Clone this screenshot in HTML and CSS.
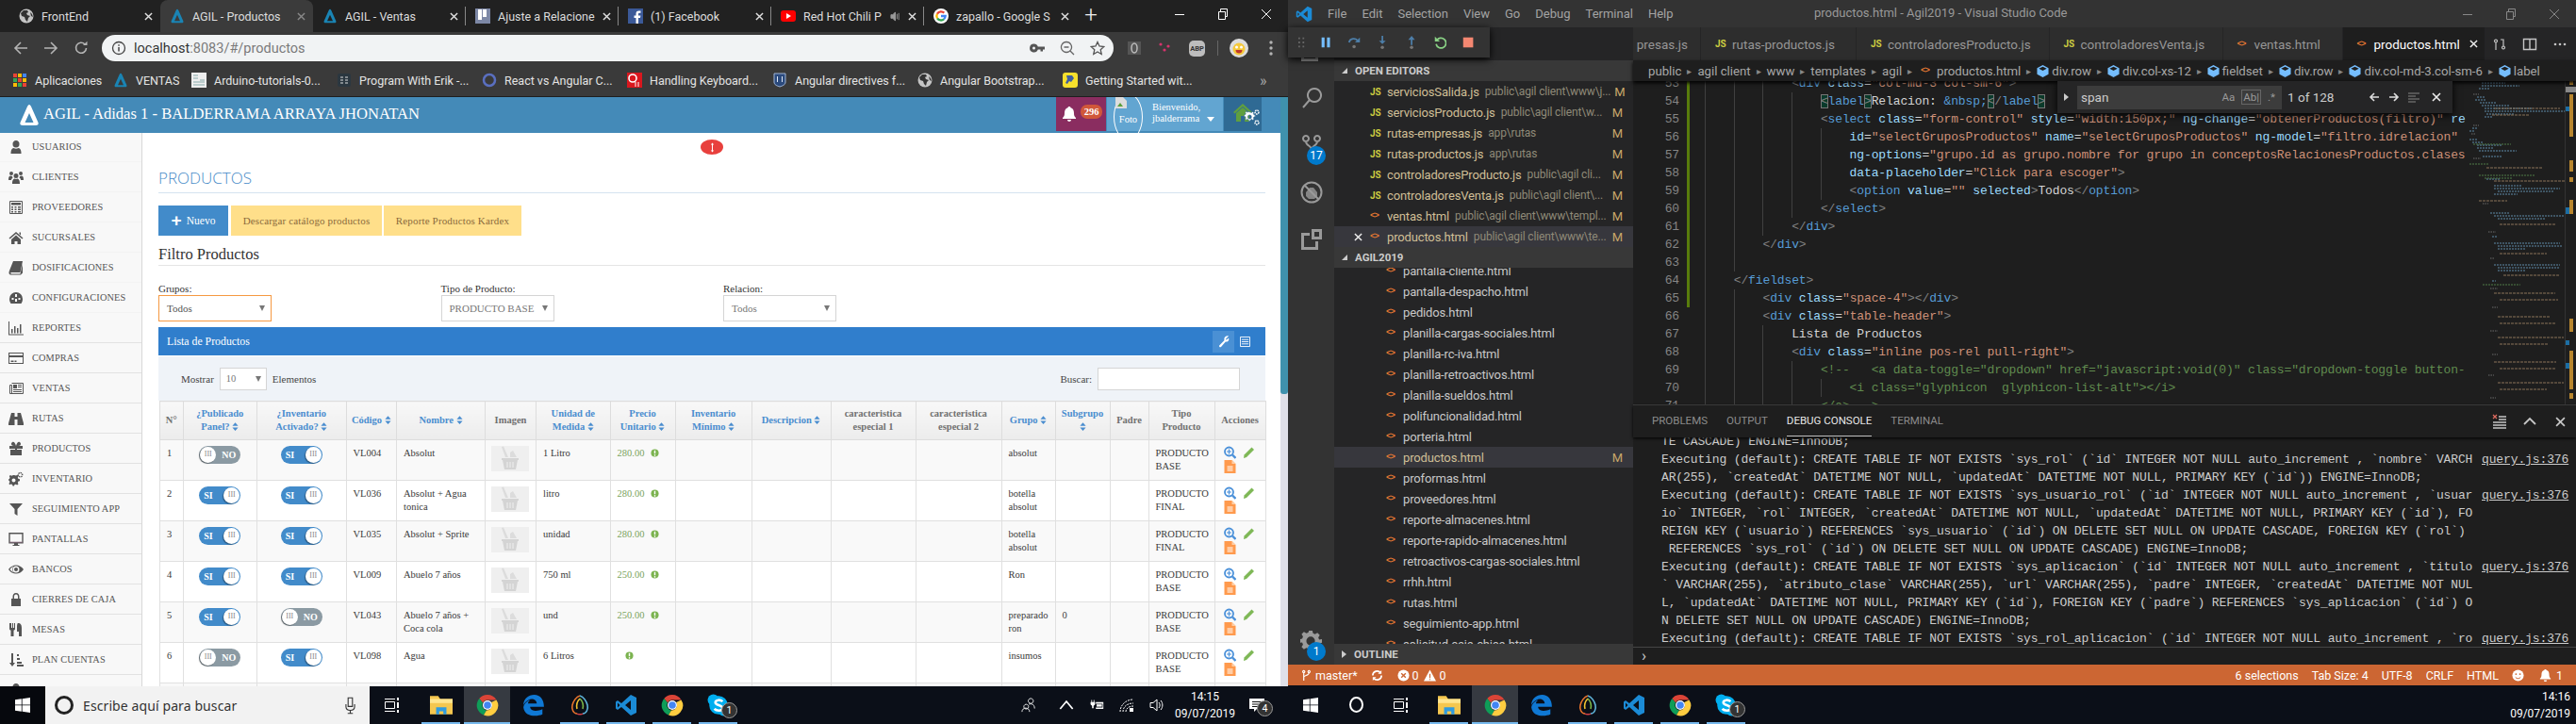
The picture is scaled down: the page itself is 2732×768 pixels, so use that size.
FILE: index.html
```html
<!DOCTYPE html>
<html lang="en">
<head>
    <meta charset="UTF-8">
    <title>AGIL - Productos</title>
    <link rel="stylesheet" href="styles.css">
</head>
<body>
<svg class="defs" width="0" height="0">
    <symbol id="i-agil" viewBox="0 0 20 24"><path fill="currentColor" fill-rule="evenodd" d="M10 1Q11 1 12 3L19.5 20Q20.5 23 17 23H3Q-.5 23 .5 20L8 3Q9 1 10 1ZM10 10 5.5 20H14.5Z"/></symbol>
    <symbol id="i-globe" viewBox="0 0 16 16"><circle cx="8" cy="8" r="7.5" fill="#c4c4c4"/><path fill="#333" d="M5 2 2 5l1 3 3 1 1 3 2 2 1-4 2-2-3-1-1-2 2-1-1-2zM12 4l2 2 1 3-2-1z"/></symbol>
    <symbol id="i-close" viewBox="0 0 10 10"><path stroke="currentColor" stroke-width="1.6" d="M1 1l8 8M9 1l-8 8"/></symbol>
    <symbol id="i-chrome" viewBox="0 0 24 24"><path fill="#db4437" d="M12 1a11 11 0 0 1 9.5 5.5H12a5.5 5.5 0 0 0-5 3L3.3 5A11 11 0 0 1 12 1z"/><path fill="#0f9d58" d="M3.3 5 7 9.5a5.5 5.5 0 0 0 4 8L8 22.5A11 11 0 0 1 3.3 5z"/><path fill="#ffcd40" d="M21.5 6.5A11 11 0 0 1 8 22.5l3-5a5.5 5.5 0 0 0 5-8.5z"/><circle cx="12" cy="12" r="5" fill="#fff"/><circle cx="12" cy="12" r="3.8" fill="#4285f4"/></symbol>
    <symbol id="i-gicon" viewBox="0 0 24 24"><circle cx="12" cy="12" r="12" fill="#fff"/><path fill="none" stroke="#4285f4" stroke-width="3.5" d="M12 12h7a7 7 0 0 1-2.500 5"/><path fill="none" stroke="#34a853" stroke-width="3.5" d="M16.500 17A7 7 0 0 1 6 15.500"/><path fill="none" stroke="#fbbc05" stroke-width="3.5" d="M6 15.500a7 7 0 0 1 0-7"/><path fill="none" stroke="#ea4335" stroke-width="3.5" d="M6 8.500a7 7 0 0 1 11-1.500"/></symbol>
    <symbol id="i-vscode" viewBox="0 0 24 24"><path fill="#1b8bd6" d="M17 1l6 3v16l-6 3L7 14l-4 3-2-1.500V8.500L3 7l4 3zM17 7l-6 5 6 5zM3 9.500v5l2.500-2.500z"/></symbol>
    <symbol id="i-sort" viewBox="0 0 8 10"><path fill="currentColor" d="M4 0l3.500 4H.5zM4 10L.5 6h7z"/></symbol>
    <symbol id="i-ok" viewBox="0 0 10 10"><circle cx="5" cy="5" r="4.500" fill="#7bb34f"/><path stroke="#fff" stroke-width="1.6" d="M5 2v3.800"/><circle cx="5" cy="7.700" r=".9" fill="#fff"/></symbol>
    <symbol id="i-mag" viewBox="0 0 13 13"><circle cx="5.500" cy="5.500" r="4.500" fill="none" stroke="#4a90d9" stroke-width="1.8"/><path stroke="#4a90d9" stroke-width="1.2" d="M5.500 3v5M3 5.500h5"/><path stroke="#4a90d9" stroke-width="2.4" d="M9 9l3.500 3.500"/></symbol>
    <symbol id="i-pencil" viewBox="0 0 13 13"><path fill="#7fb857" d="M9.500 1l2.500 2.500L4 11.500 1 12.500 1.500 9z"/></symbol>
    <symbol id="i-file" viewBox="0 0 12 14"><path fill="#ff9a4d" d="M0 0h8l4 4v10H0z"/><path fill="#ffd0a8" d="M8 0l4 4H8z"/><path stroke="#fff" d="M3 7h6M3 9h6M3 11h6"/></symbol>
    <symbol id="i-basket" viewBox="0 0 24 26"><path fill="#d4d4d4" d="M3 13h18v2h-1l-2 10H6L4 15H3z"/><path stroke="#efefef" d="M9 17v6M12 17v6M15 17v6"/><path fill="#dcdcdc" d="M3 1l2-.5L10 12H7zM12 7l3-2 4 7h-7z"/></symbol>
    <symbol id="i-win" viewBox="0 0 16 16"><path fill="#fff" d="M0 2.200 6.800 1.300V7.500H0zM7.600 1.200 16 0V7.500H7.600zM0 8.300H6.800V14.700L0 13.800zM7.600 8.300H16V16L7.600 14.800z"/></symbol>
    <symbol id="i-taskview" viewBox="0 0 16 18"><path fill="none" stroke="#fff" d="M.5 5.500h10v7H.5zM0 2.500h11M0 15.500h11"/><path fill="#fff" d="M13 1h2v3h-2zM13 6h2v6h-2zM13 14h2v3h-2z"/></symbol>
    <symbol id="i-folder" viewBox="0 0 22 22"><path fill="#f5c74f" d="M0 2h8l2 3h12v15H0z"/><path fill="#ffe58f" d="M0 5h22v4H0z"/><path fill="#2f9be0" d="M6 13h10v7h-3v-3H9v3H6z"/></symbol>
    <symbol id="i-edge" viewBox="0 0 22 22"><path fill="#0f78d4" d="M1 11C1 5 6 1 11.500 1 17.500 1 21 6 21 12.500H7.500c.3 4.500 7 5 12 2.500v5C14 22.500 2 22.500 1 13 2 9 5 7 7.500 6 6 7.500 5.500 8.500 5.500 9.500H14c0-4-5-5.500-8-3.500-2 1-4 3-5 5z"/></symbol>
    <symbol id="i-navicat" viewBox="0 0 22 24"><path fill="none" stroke="#e8732c" stroke-width="1.6" d="M11 2C7 3 4 8 3 12s1 9 5 9"/><path fill="none" stroke="#5fb3d9" stroke-width="1.6" d="M11 2c4 1 7 6 8 10s-1 9-5 9"/><path fill="none" stroke="#f2c230" stroke-width="1.6" d="M11 5c-3 3-4 7-3 11"/><path fill="none" stroke="#7ab648" stroke-width="1.6" d="M11 5c3 3 4 7 3 11"/><path fill="none" stroke="#d8424a" stroke-width="1.6" d="M8 21c1 1 5 1 6 0"/></symbol>
    <symbol id="i-skype" viewBox="0 0 22 22"><circle cx="6" cy="6" r="5.500" fill="#00aff0"/><circle cx="16" cy="16" r="5.500" fill="#00aff0"/><circle cx="11" cy="11" r="9" fill="#00aff0"/><path fill="none" stroke="#fff" stroke-width="2.4" d="M15 7.500c-2-2-7-2-7 1 0 3 7 2 7 5.500 0 3-6 3-8 .5"/></symbol>
    <symbol id="i-mic" viewBox="0 0 12 20"><path fill="none" stroke="#333" stroke-width="1.2" d="M3.500 1.500h5v10h-5zM1 9v3c0 3 2 4 5 4s5-1 5-4V9M6 16v3M3 19.500h6"/></symbol>
    <symbol id="i-chev" viewBox="0 0 12 8"><path fill="none" stroke="#fff" stroke-width="1.3" d="M1 7l5-6 5 6"/></symbol>
    <symbol id="i-people" viewBox="0 0 18 18"><path fill="none" stroke="#fff" d="M11.500 1a3 3 0 1 1-.01 0zM6 8a2.800 2.800 0 1 1-.01 0zM1 17c0-6 9-6 9 0M9 8c2-1 7-1 7 5"/></symbol>
    <symbol id="i-plug" viewBox="0 0 20 16"><path fill="#fff" d="M3 1h1v3h2V1h1v3h1v3L6 9v3H4V9L2 7V4h1zM9 4h10v9H9V11h9V6H9z"/><path fill="#fff" d="M10 7h7v3h-7z"/></symbol>
    <symbol id="i-wifi" viewBox="0 0 16 16"><path fill="none" stroke="#fff" d="M1 15C1 8 7 2 15 2M4 15c0-5 4-9 11-9M7 15c0-3 3-6 8-6" stroke-dasharray="2 1"/><path fill="#fff" d="M11 11h4v4h-4z"/></symbol>
    <symbol id="i-vol" viewBox="0 0 16 16"><path fill="none" stroke="#fff" d="M1 5.500h3L8 2v12L4 10.500H1zM10 5c1.500 2 1.500 4 0 6M12 3c2.500 3 2.500 7 0 10"/></symbol>
    <symbol id="i-note" viewBox="0 0 16 16"><path fill="#fff" d="M0 1h16v11H8l-3 3v-3H0z"/><path stroke="#111" d="M3 4.500h10M3 7h10M3 9.500h6"/></symbol>
    <symbol id="i-user" viewBox="0 0 16 16"><path fill="currentColor" d="M8 1a3.500 3.500 0 0 1 3.500 4C11.500 7 10.500 8.500 8 8.500S4.500 7 4.500 5A3.500 3.500 0 0 1 8 1zM2.500 15c0-4 1-5.500 3-6 1.500 1 3.500 1 5 0 2 .5 3 2 3 6z"/></symbol>
    <symbol id="i-users" viewBox="0 0 16 16"><path fill="currentColor" d="M8 4a2.500 2.500 0 1 1 0 5 2.500 2.500 0 0 1 0-5zM4 15c0-4 1-5 2.500-5.500 1 .5 2 .5 3 0C11 10 12 11 12 15zM3 2a2 2 0 1 1 0 4 2 2 0 0 1 0-4zM13 2a2 2 0 1 1 0 4 2 2 0 0 1 0-4zM0 11c0-3 .5-4 2-4.500.5.300 1 .5 2 .5 0 .5.200 1 .5 1.500C3.500 9.500 3 10 3 11zM16 11c0-3-.5-4-2-4.500-.5.300-1 .5-2 .5 0 .5-.2 1-.5 1.500 1 .5 1.500 1 1.500 2.500z"/></symbol>
    <symbol id="i-calc" viewBox="0 0 16 16"><path fill="none" stroke="currentColor" d="M1.500 1.500h13v13h-13z"/><path fill="currentColor" d="M3 3h10v2.500H3zM3 7h2v1.500H3zM6.500 7h2v1.500h-2zM10 7h3v1.500h-3zM3 9.500h2V11H3zM6.500 9.500h2V11h-2zM10 9.500h3V11h-3zM3 12h2v1.500H3zM6.500 12h2v1.500h-2zM10 12h3v1.500h-3z"/></symbol>
    <symbol id="i-home" viewBox="0 0 16 16"><path fill="currentColor" d="M8 2l7.500 6.500-1 1L8 4 1.500 9.500l-1-1zM3 10l5-4.500 5 4.500v5H9.500v-3h-3v3H3zM11.500 2.500H13v3l-1.500-1.300z"/></symbol>
    <symbol id="i-book" viewBox="0 0 16 16"><path fill="currentColor" d="M5 1h10l-2.500 12H3c-1 0-1 1.500 0 1.500h9.500L15 4v9.500L13 15.500H3C.5 15.500 0 13.500 1 11z"/></symbol>
    <symbol id="i-dash" viewBox="0 0 16 16"><path fill="currentColor" fill-rule="evenodd" d="M8 2a7 7 0 0 1 7 7c0 2-.5 3.500-1.500 5h-11C1.500 12.500 1 11 1 9a7 7 0 0 1 7-7zM7 4v3h2V4zM3.500 8v2h2V8zM10.500 8v2h2V8zM7 9v3h2V9z"/></symbol>
    <symbol id="i-bars" viewBox="0 0 16 16"><path fill="currentColor" d="M0 1h1v13.500h16V15.500H0zM3 9h1.500v4.500H3zM6 6h1.500v7.500H6zM9 8h1.500v5.500H9zM12 4h1.500v9.500H12z"/></symbol>
    <symbol id="i-card" viewBox="0 0 16 16"><path fill="currentColor" fill-rule="evenodd" d="M0 2h16v12H0zM1 3v2h14V3zM1 7v6h14V7zM2.500 10.500h3V12h-3zM6.500 10.500h2V12h-2z"/></symbol>
    <symbol id="i-news" viewBox="0 0 16 16"><path fill="none" stroke="currentColor" d="M3.500 2.500h12v11h-14v-9h2v9"/><path fill="currentColor" d="M5 4h4v4H5zM10 4h4v1h-4zM10 6h4v1h-4zM5 9h9v1H5zM5 11h9v1H5z"/></symbol>
    <symbol id="i-bino" viewBox="0 0 16 16"><path fill="currentColor" d="M3 2h3.500v4h3V2H13l3 11v2H9.500V9h-3v6H0v-2z"/></symbol>
    <symbol id="i-gift" viewBox="0 0 16 16"><path fill="currentColor" d="M1 5h14v3H1zM2 9h5v6H2zM9 9h5v6H9zM7 5h2v10H7zM4 1c2-1 3 1 4 4-3 0-5 0-5-2 0-1 .5-1.500 1-2zM12 1c-2-1-3 1-4 4 3 0 5 0 5-2 0-1-.5-1.500-1-2z"/></symbol>
    <symbol id="i-cogs" viewBox="0 0 16 16"><path fill="currentColor" fill-rule="evenodd" d="M5 4l2 .5 1.500-.8 1 1.300-.7 1.500.7 1.500 1.500.3v2l-1.500.3-.7 1.500.7 1.400-1.300 1-1.500-.7L5.500 14 5 15.500H3.500L3 14l-1.500-.5-1.300.7-.7-1.300.8-1.400L0 10l-1-.5v-1L0 8l.5-1.500-.7-1.400 1.200-1 1.400.7L4 4zM4.500 7.500a2 2 0 1 0 0 4 2 2 0 0 0 0-4z" transform="translate(1)"/><path fill="none" stroke="currentColor" stroke-width="1.4" stroke-dasharray="1.500 .7" d="M12.500 1.500a2.200 2.200 0 1 1-.01 0z"/></symbol>
    <symbol id="i-filter" viewBox="0 0 16 16"><path fill="currentColor" d="M1 2h14L9.500 8v7l-3-2V8z"/></symbol>
    <symbol id="i-screen" viewBox="0 0 16 16"><path fill="none" stroke="currentColor" stroke-width="1.4" d="M1 1.700h14v10H1z"/><path fill="currentColor" d="M6 12h4v2h1.500v1h-7v-1H6z"/><path fill="#8a6a80" d="M1 10.500h14v1.400H1z" opacity=".6"/></symbol>
    <symbol id="i-eye" viewBox="0 0 16 16"><path fill="currentColor" fill-rule="evenodd" d="M0 8c4-6 12-6 16 0-4 6-12 6-16 0zM8 4.500a3.500 3.500 0 1 0 0 7 3.500 3.500 0 0 0 0-7zM1.500 8c1.500 2 3 3 4 3.500C4.500 10.500 4 9.300 4 8s.5-2.500 1.500-3.500c-1 .5-2.500 1.500-4 3.500z"/><circle cx="8" cy="8" r="2" fill="currentColor"/></symbol>
    <symbol id="i-lock" viewBox="0 0 16 16"><path fill="currentColor" fill-rule="evenodd" d="M8 1c2.500 0 3.500 1.800 3.500 4v2H13v8H3V7h1.500V5C4.500 2.800 5.500 1 8 1zM6 7h4V5C10 3.500 9.500 2.500 8 2.500S6 3.500 6 5z"/></symbol>
    <symbol id="i-fork" viewBox="0 0 16 16"><path fill="currentColor" d="M2 1h1v5h1V1h1v5h1V1h1v6c0 1-1 1.500-1.500 1.800V15h-3V8.800C2 8.500 1 8 1 7V1zM10 1c3 0 4 2 4 5v9h-3v-5h-2V5c0-2 .5-4 1-4z"/></symbol>
    <symbol id="i-sortamt" viewBox="0 0 16 16"><path fill="currentColor" d="M3 1h2v10h2l-3 4-3-4h2zM9 2h2v2H9zM9 6h3v2H9zM9 10h5v2H9zM9 13h7v2H9z"/></symbol>
    <symbol id="i-search" viewBox="0 0 24 24"><path fill="none" stroke="currentColor" stroke-width="2" d="M15 2a7 7 0 1 1-.01 0zM9.500 14.500 3 22"/></symbol>
    <symbol id="i-git" viewBox="0 0 24 24"><path fill="none" stroke="currentColor" stroke-width="2" d="M6 2a3 3 0 1 1-.01 0zM18 2a3 3 0 1 1-.01 0zM6 8c0 5 6 4 6 9 0-5 6-4 6-9"/></symbol>
    <symbol id="i-debug" viewBox="0 0 24 24"><circle cx="12" cy="12" r="10.500" fill="none" stroke="currentColor" stroke-width="2"/><path fill="none" stroke="currentColor" stroke-width="2" d="M5 5l14 14"/><path fill="currentColor" d="M10 7h4l4 5v4l-3 3H9L6 16v-4z" opacity=".8"/></symbol>
    <symbol id="i-ext" viewBox="0 0 24 24"><path fill="currentColor" fill-rule="evenodd" d="M1 5h9v3H4v12h12v-6h3v9H1zM12 1h11v11H12zM15 4v5h5V4z"/></symbol>
    <symbol id="i-gear" viewBox="0 0 24 24"><path fill="currentColor" fill-rule="evenodd" d="M10 1h4l.7 3.200 2.300 1 2.800-1.700 2.700 2.700-1.700 2.800 1 2.300L25 11v4l-3.200.7-1 2.300 1.700 2.800-2.700 2.700-2.800-1.700-2.300 1L14 25h-4l-.7-3.200-2.300-1-2.800 1.700-2.700-2.700 1.700-2.800-1-2.300L-1 15v-4l3.200-.7 1-2.300L1.500 5.200l2.700-2.700L7 4.200l2.300-1zM12 8a5 5 0 1 0 0 10 5 5 0 0 0 0-10z" transform="scale(.92)"/></symbol>
    <symbol id="i-cube" viewBox="0 0 14 14"><path fill="#75beff" d="M7 0l6.500 3.500v7L7 14 .5 10.500v-7zM2.500 4 7 6.500 11.500 4 7 1.800z"/></symbol>
</svg>

<div class="screen">
    <!-- left monitor: browser -->
    <div class="monitor-left">
        <div class="tabstrip">
            <div class="tab tab-first"><svg class="tab-icon"><use href="#i-globe"/></svg><span class="tab-title">FrontEnd</span><svg class="tab-x"><use href="#i-close"/></svg></div>
            <div class="tab active"><svg class="tab-icon agil-teal"><use href="#i-agil"/></svg><span class="tab-title">AGIL - Productos</span><svg class="tab-x dim"><use href="#i-close"/></svg></div>
            <div class="tab sep"><svg class="tab-icon agil-teal"><use href="#i-agil"/></svg><span class="tab-title">AGIL - Ventas</span><svg class="tab-x"><use href="#i-close"/></svg></div>
            <div class="tab sep"><svg class="tab-icon" viewBox="0 0 16 16"><rect width="16" height="16" fill="#7d88a6"/><path fill="#fff" d="M3 1h4v11H3zM8 1h4v8H8z"/></svg><span class="tab-title">Ajuste a Relacione</span><svg class="tab-x"><use href="#i-close"/></svg></div>
            <div class="tab sep"><svg class="tab-icon" viewBox="0 0 16 16"><rect width="16" height="16" fill="#3b5998"/><path fill="#fff" d="M11 16V10h2l.4-2.500H11V6c0-.8.300-1.200 1.200-1.200h1.300V2.500H11.500C9.500 2.500 8.500 3.800 8.500 5.600v1.900H6.500V10h2v6z"/></svg><span class="tab-title">(1) Facebook</span><svg class="tab-x"><use href="#i-close"/></svg></div>
            <div class="tab sep"><svg class="tab-icon" viewBox="0 0 16 16"><rect y="2" width="16" height="12" rx="3" fill="#f00"/><path fill="#fff" d="M6 5l5 3-5 3z"/></svg><span class="tab-title">Red Hot Chili P</span><svg class="tab-sound" viewBox="0 0 12 12"><path fill="#999" d="M1 4h2l3-3v10L3 8H1zM8 3v6M10 2v8" stroke="#999"/></svg><svg class="tab-x"><use href="#i-close"/></svg></div>
            <div class="tab"><svg class="tab-icon"><use href="#i-gicon"/></svg><span class="tab-title">zapallo - Google S</span><svg class="tab-x"><use href="#i-close"/></svg></div>
            <span class="new-tab">+</span>
            <div class="win-controls">
                <svg class="win-btn" viewBox="0 0 12 12"><path stroke="#fff" d="M1 6.500h10"/></svg>
                <svg class="win-btn" viewBox="0 0 12 12"><path fill="none" stroke="#fff" d="M1.500 3.500h7v8h-7zM3.500 3.500v-3h7v8h-2"/></svg>
                <svg class="win-btn" viewBox="0 0 12 12"><path stroke="#fff" d="M1 1l10 10M11 1L1 11"/></svg>
            </div>
        </div>

        <div class="toolbar">
            <div class="nav-btns">
                <svg class="nav-btn" viewBox="0 0 16 16"><path fill="none" stroke="#b4b4b4" stroke-width="1.6" d="M15 8H2M8 2 2 8l6 6"/></svg>
                <svg class="nav-btn" viewBox="0 0 16 16"><path fill="none" stroke="#b4b4b4" stroke-width="1.6" d="M1 8h13M8 2l6 6-6 6"/></svg>
                <svg class="nav-btn" viewBox="0 0 16 16"><path fill="none" stroke="#b4b4b4" stroke-width="1.6" d="M13.500 8A5.500 5.500 0 1 1 12 4"/><path fill="#b4b4b4" d="M10 5h4.500V.8z"/></svg>
            </div>
            <div class="omnibox">
                <svg class="omni-info" viewBox="0 0 16 16"><circle cx="8" cy="8" r="6.500" fill="none" stroke="#444" stroke-width="1.3"/><path stroke="#444" stroke-width="1.5" d="M8 7v4.500M8 4.200v1.500"/></svg>
                <span class="url"><span class="url-host">localhost</span>:8083/#/productos</span>
                <svg class="omni-btn" viewBox="0 0 16 16"><path fill="#555" fill-rule="evenodd" d="M4.500 3.500a4.500 4.500 0 0 1 4.300 3H16v3h-2v2h-2.500v-2H8.800A4.500 4.500 0 1 1 4.500 3.500zM4.500 6.500a1.500 1.500 0 1 0 0 3 1.500 1.500 0 0 0 0-3z"/></svg>
                <svg class="omni-btn" viewBox="0 0 16 16"><path fill="none" stroke="#666" stroke-width="1.3" d="M7 1.500a5.500 5.500 0 1 1-.01 0zM11 11l4 4M4.500 7h5"/></svg>
                <svg class="omni-btn" viewBox="0 0 16 16"><path fill="none" stroke="#555" stroke-width="1.3" d="M8 1.500l2 4.500 4.800.5-3.600 3.200 1 4.800L8 12l-4.200 2.500 1-4.800L1.200 6.500 6 6z"/></svg>
            </div>
            <svg class="ext-btn" viewBox="0 0 16 16"><rect x="1" y="1" width="14" height="14" fill="#555"/><ellipse cx="8" cy="8" rx="3" ry="5" fill="none" stroke="#bbb" stroke-width="1.5"/></svg>
            <svg class="ext-btn" viewBox="0 0 16 16"><circle cx="4" cy="4" r="1.600" fill="#d6336c"/><circle cx="8" cy="10" r="1.600" fill="#d6336c"/><circle cx="12" cy="6" r="1.600" fill="#d6336c"/></svg>
            <div class="ext-abp">ABP</div>
            <span class="tool-sep"></span>
            <svg class="avatar" viewBox="0 0 20 20"><circle cx="10" cy="10" r="10" fill="#ddd"/><circle cx="10" cy="11" r="6.500" fill="#f5c93a"/><circle cx="7.500" cy="9" r="1.500" fill="#fff"/><circle cx="12.500" cy="9" r="1.500" fill="#fff"/><path fill="#c0392b" d="M6.500 12h7c0 2.500-1.500 3.500-3.500 3.500S6.500 14.500 6.500 12z"/></svg>
            <svg class="menu-dots" viewBox="0 0 4 16"><circle cx="2" cy="2" r="1.700" fill="#b4b4b4"/><circle cx="2" cy="8" r="1.700" fill="#b4b4b4"/><circle cx="2" cy="14" r="1.700" fill="#b4b4b4"/></svg>
        </div>

        <div class="bookmarks">
            <div class="bm bm-apps"><svg class="bm-icon" viewBox="0 0 16 16"><path fill="#ea4335" d="M1 1h4v4H1z"/><path fill="#fbbc05" d="M6 1h4v4H6z"/><path fill="#4285f4" d="M11 1h4v4h-4z"/><path fill="#34a853" d="M1 6h4v4H1z"/><path fill="#ea4335" d="M6 6h4v4H6z"/><path fill="#fbbc05" d="M11 6h4v4h-4z"/><path fill="#fbbc05" d="M1 11h4v4H1z"/><path fill="#34a853" d="M6 11h4v4H6z"/><path fill="#ea4335" d="M11 11h4v4h-4z"/></svg><span>Aplicaciones</span></div>
            <div class="bm bm-ventas"><svg class="bm-icon agil-teal"><use href="#i-agil"/></svg><span>VENTAS</span></div>
            <div class="bm"><svg class="bm-icon" viewBox="0 0 16 16"><rect width="16" height="16" fill="#eee"/><path stroke="#8aa" d="M2 3h5M2 6h5M9 8h5M2 10h12M2 13h12"/></svg><span>Arduino-tutorials-0...</span></div>
            <div class="bm"><svg class="bm-icon" viewBox="0 0 16 16"><rect x="1" y="1" width="14" height="14" rx="2" fill="#2b3740"/><path stroke="#ddd" d="M4 5h3M9 5h3M4 8h3M9 8h3M4 11h3M9 11h3"/></svg><span>Program With Erik -...</span></div>
            <div class="bm"><svg class="bm-icon" viewBox="0 0 16 16"><circle cx="8" cy="8" r="6" fill="none" stroke="#5a6fc0" stroke-width="2.5"/></svg><span>React vs Angular C...</span></div>
            <div class="bm"><svg class="bm-icon" viewBox="0 0 16 16"><rect width="16" height="16" fill="#d9171e"/><circle cx="6" cy="6" r="4" fill="none" stroke="#fff" stroke-width="1.6"/><path stroke="#fff" d="M9 10v5M12 10v5"/></svg><span>Handling Keyboard...</span></div>
            <div class="bm"><svg class="bm-icon" viewBox="0 0 16 16"><path fill="#2b4a7d" stroke="#9fb4d6" d="M2 1h12v9c0 3-3 4-6 5-3-1-6-2-6-5z"/><path stroke="#dfe8f6" d="M5.500 4v6M10.500 4v6"/></svg><span>Angular directives f...</span></div>
            <div class="bm"><svg class="bm-icon"><use href="#i-globe"/></svg><span>Angular Bootstrap...</span></div>
            <div class="bm"><svg class="bm-icon" viewBox="0 0 16 16"><rect width="16" height="16" rx="3" fill="#f6e02c"/><path fill="#3f5f9e" d="M4 3h6l2 3-3 4-2-1-2 3-2-1 2-4z"/></svg><span>Getting Started wit...</span></div>
            <span class="bm-more">»</span>
        </div>

        <div class="app">
            <div class="app-main">
                <div class="app-header">
                    <svg class="brand-logo"><use href="#i-agil"/></svg>
                    <span class="brand-text">AGIL - Adidas 1 - BALDERRAMA ARRAYA JHONATAN</span>
                    <div class="hd-notify">
                        <svg class="hd-bell" viewBox="0 0 14 16"><path fill="#fff" d="M7 0c1 0 1.500.6 1.500 1.300C11 2 12 4 12 7c0 2.500.5 3.500 2 5v1H0v-1c1.500-1.500 2-2.500 2-5 0-3 1-5 3.500-5.700C5.500.6 6 0 7 0zM5 14h4c0 1.200-1 2-2 2s-2-.8-2-2z"/></svg>
                        <span class="hd-badge">296</span>
                    </div>
                    <div class="hd-profile">
                        <div class="photo"><svg class="photo-broken" viewBox="0 0 12 12"><path fill="#ddd" d="M0 0h8l4 4v8H0z"/><path fill="#5a9e3a" d="M2 10l3-4 3 4z"/></svg><span class="photo-alt">Foto</span></div>
                        <div class="hello">Bienvenido,<br>jbalderrama</div>
                        <span class="hd-caret"></span>
                    </div>
                    <div class="hd-home">
                        <svg class="hd-home-icon" viewBox="0 0 28 26"><path fill="#5f9f3f" d="M10 1l10 9-1.500 1.500L10 4 1.500 11.500 0 10zM3 11l7-6 7 6v9H12v-6H8v6H3z"/><path fill="#fff" fill-rule="evenodd" stroke="#2f6a94" stroke-width=".6" d="M18 10l1.500.4 1-.9 1.300 1-.5 1.200.7 1.100 1.300.2v1.700l-1.300.3-.6 1.100.6 1.200-1.300 1.100-1-.8-1.300.4-.4 1.300h-1.600l-.3-1.300-1.300-.5-1.100.8-1.100-1.200.6-1.100-.5-1.200-1.300-.3v-1.600l1.300-.3.5-1.200-.6-1.100 1.100-1 1.100.7 1.300-.5zM17.300 13a2 2 0 1 0 0 4 2 2 0 0 0 0-4z"/><circle cx="25" cy="10" r="2" fill="none" stroke="#fff" stroke-width="1.5" stroke-dasharray="1.500 .7"/><circle cx="25" cy="21" r="2" fill="none" stroke="#fff" stroke-width="1.5" stroke-dasharray="1.500 .7"/></svg>
                    </div>
                </div>
                <div class="app-body">
                    <nav class="side">
                        <a class="side-item"><svg class="side-ic"><use href="#i-user"/></svg>USUARIOS</a>
                        <a class="side-item"><svg class="side-ic"><use href="#i-users"/></svg>CLIENTES</a>
                        <a class="side-item"><svg class="side-ic"><use href="#i-calc"/></svg>PROVEEDORES</a>
                        <a class="side-item"><svg class="side-ic"><use href="#i-home"/></svg>SUCURSALES</a>
                        <a class="side-item"><svg class="side-ic"><use href="#i-book"/></svg>DOSIFICACIONES</a>
                        <a class="side-item"><svg class="side-ic"><use href="#i-dash"/></svg>CONFIGURACIONES</a>
                        <a class="side-item"><svg class="side-ic"><use href="#i-bars"/></svg>REPORTES</a>
                        <a class="side-item"><svg class="side-ic"><use href="#i-card"/></svg>COMPRAS</a>
                        <a class="side-item"><svg class="side-ic"><use href="#i-news"/></svg>VENTAS</a>
                        <a class="side-item"><svg class="side-ic"><use href="#i-bino"/></svg>RUTAS</a>
                        <a class="side-item"><svg class="side-ic"><use href="#i-gift"/></svg>PRODUCTOS</a>
                        <a class="side-item"><svg class="side-ic"><use href="#i-cogs"/></svg>INVENTARIO</a>
                        <a class="side-item"><svg class="side-ic"><use href="#i-filter"/></svg>SEGUIMIENTO APP</a>
                        <a class="side-item"><svg class="side-ic"><use href="#i-screen"/></svg>PANTALLAS</a>
                        <a class="side-item"><svg class="side-ic"><use href="#i-eye"/></svg>BANCOS</a>
                        <a class="side-item"><svg class="side-ic"><use href="#i-lock"/></svg>CIERRES DE CAJA</a>
                        <a class="side-item"><svg class="side-ic"><use href="#i-fork"/></svg>MESAS</a>
                        <a class="side-item"><svg class="side-ic"><use href="#i-sortamt"/></svg>PLAN CUENTAS</a>
                        <a class="side-item"><svg class="side-ic"><use href="#i-user"/></svg></a>
                    </nav>
                    <main class="content">
                        <div class="alert-pill"><svg viewBox="0 0 6 12" width="5" height="11"><path stroke="#fff" stroke-width="1.2" d="M3 1.500v9"/><path fill="#fff" d="M3 0l2 2.500H1zM3 12l-2-2.500h4z"/></svg></div>
                        <h1 class="page-title">PRODUCTOS</h1>
                        <div class="btn-row">
                            <button class="btn btn-primary"><span class="btn-plus">+</span>Nuevo</button>
                            <button class="btn btn-warn btn-a">Descargar catálogo productos</button>
                            <button class="btn btn-warn btn-b">Reporte Productos Kardex</button>
                        </div>
                        <h2 class="filter-title">Filtro Productos</h2>
                        <div class="filters">
                            <div class="field"><label class="field-label">Grupos:</label><div class="select focus"><span class="select-val">Todos</span><span class="arrow"></span></div></div>
                            <div class="field"><label class="field-label">Tipo de Producto:</label><div class="select"><span class="select-val">PRODUCTO BASE</span><span class="arrow"></span></div></div>
                            <div class="field"><label class="field-label">Relacion:</label><div class="select"><span class="select-val">Todos</span><span class="arrow"></span></div></div>
                        </div>
                        <div class="list-head">
                            <span>Lista de Productos</span>
                            <span class="list-tool active"><svg viewBox="0 0 12 14" width="12" height="14"><path fill="#fff" d="M11 1.500 8.500 4l-.5 1.500L9.500 5l1.500-1.500c.7 1.500.2 3-1 3.700-.7.400-1.500.4-2.200.2L3 13c-.7.700-2 .2-2-1 0-.3.100-.6.400-.8l5.100-5.200C6 4.500 6.500 3 7.700 2 8.700 1.200 10 1 11 1.500z"/></svg></span>
                            <span class="list-tool"><svg viewBox="0 0 12 14" width="11" height="13"><path fill="none" stroke="#fff" d="M.5 1.500h11v11H.5z"/><path stroke="#fff" d="M2 4.500h8M2 7h8M2 9.500h8"/></svg></span>
                        </div>
                        <div class="list-tools">
                            <span>Mostrar</span>
                            <div class="select select-sm"><span class="select-val">10</span><span class="arrow"></span></div>
                            <span>Elementos</span>
                            <span class="search-label">Buscar:</span>
                            <input class="search-box" type="text">
                        </div>
                        <table class="grid">
                            <colgroup>
                                <col class="w-n"><col class="w-pub"><col class="w-inv"><col class="w-cod"><col class="w-nom"><col class="w-img"><col class="w-uni"><col class="w-pre"><col class="w-min"><col class="w-des"><col class="w-c1"><col class="w-c2"><col class="w-gru"><col class="w-sub"><col class="w-pad"><col class="w-tip"><col class="w-acc">
                            </colgroup>
                            <thead>
                                <tr>
                                    <th class="plain">N°</th>
                                    <th>¿Publicado Panel? <svg class="sort"><use href="#i-sort"/></svg></th>
                                    <th>¿Inventario Activado? <svg class="sort"><use href="#i-sort"/></svg></th>
                                    <th>Código <svg class="sort"><use href="#i-sort"/></svg></th>
                                    <th>Nombre <svg class="sort"><use href="#i-sort"/></svg></th>
                                    <th class="plain">Imagen</th>
                                    <th>Unidad de Medida <svg class="sort"><use href="#i-sort"/></svg></th>
                                    <th>Precio Unitario <svg class="sort"><use href="#i-sort"/></svg></th>
                                    <th>Inventario Mínimo <svg class="sort"><use href="#i-sort"/></svg></th>
                                    <th>Descripcion <svg class="sort"><use href="#i-sort"/></svg></th>
                                    <th class="plain">caracteristica especial 1</th>
                                    <th class="plain">caracteristica especial 2</th>
                                    <th>Grupo <svg class="sort"><use href="#i-sort"/></svg></th>
                                    <th>Subgrupo <svg class="sort"><use href="#i-sort"/></svg></th>
                                    <th class="plain">Padre</th>
                                    <th class="plain">Tipo Producto</th>
                                    <th class="plain">Acciones</th>
                                </tr>
                            </thead>
                            <tbody>
                                <tr>
                                    <td>1</td>
                                    <td class="ctr"><span class="toggle off"><i class="knob">III</i><b>NO</b></span></td>
                                    <td class="ctr"><span class="toggle on"><b>SI</b><i class="knob">III</i></span></td>
                                    <td>VL004</td><td>Absolut</td>
                                    <td class="ctr-img"><span class="thumb"><svg><use href="#i-basket"/></svg></span></td>
                                    <td>1 Litro</td>
                                    <td class="price">280.00 <svg class="ok"><use href="#i-ok"/></svg></td>
                                    <td></td><td></td><td></td><td></td>
                                    <td>absolut</td><td></td><td></td><td>PRODUCTO BASE</td>
                                    <td class="acts"><svg class="act"><use href="#i-mag"/></svg><svg class="act"><use href="#i-pencil"/></svg><svg class="act"><use href="#i-file"/></svg></td>
                                </tr>
                                <tr>
                                    <td>2</td>
                                    <td class="ctr"><span class="toggle on"><b>SI</b><i class="knob">III</i></span></td>
                                    <td class="ctr"><span class="toggle on"><b>SI</b><i class="knob">III</i></span></td>
                                    <td>VL036</td><td>Absolut + Agua tonica</td>
                                    <td class="ctr-img"><span class="thumb"><svg><use href="#i-basket"/></svg></span></td>
                                    <td>litro</td>
                                    <td class="price">280.00 <svg class="ok"><use href="#i-ok"/></svg></td>
                                    <td></td><td></td><td></td><td></td>
                                    <td>botella absolut</td><td></td><td></td><td>PRODUCTO FINAL</td>
                                    <td class="acts"><svg class="act"><use href="#i-mag"/></svg><svg class="act"><use href="#i-pencil"/></svg><svg class="act"><use href="#i-file"/></svg></td>
                                </tr>
                                <tr>
                                    <td>3</td>
                                    <td class="ctr"><span class="toggle on"><b>SI</b><i class="knob">III</i></span></td>
                                    <td class="ctr"><span class="toggle on"><b>SI</b><i class="knob">III</i></span></td>
                                    <td>VL035</td><td>Absolut + Sprite</td>
                                    <td class="ctr-img"><span class="thumb"><svg><use href="#i-basket"/></svg></span></td>
                                    <td>unidad</td>
                                    <td class="price">280.00 <svg class="ok"><use href="#i-ok"/></svg></td>
                                    <td></td><td></td><td></td><td></td>
                                    <td>botella absolut</td><td></td><td></td><td>PRODUCTO FINAL</td>
                                    <td class="acts"><svg class="act"><use href="#i-mag"/></svg><svg class="act"><use href="#i-pencil"/></svg><svg class="act"><use href="#i-file"/></svg></td>
                                </tr>
                                <tr>
                                    <td>4</td>
                                    <td class="ctr"><span class="toggle on"><b>SI</b><i class="knob">III</i></span></td>
                                    <td class="ctr"><span class="toggle on"><b>SI</b><i class="knob">III</i></span></td>
                                    <td>VL009</td><td>Abuelo 7 años</td>
                                    <td class="ctr-img"><span class="thumb"><svg><use href="#i-basket"/></svg></span></td>
                                    <td>750 ml</td>
                                    <td class="price">250.00 <svg class="ok"><use href="#i-ok"/></svg></td>
                                    <td></td><td></td><td></td><td></td>
                                    <td>Ron</td><td></td><td></td><td>PRODUCTO BASE</td>
                                    <td class="acts"><svg class="act"><use href="#i-mag"/></svg><svg class="act"><use href="#i-pencil"/></svg><svg class="act"><use href="#i-file"/></svg></td>
                                </tr>
                                <tr>
                                    <td>5</td>
                                    <td class="ctr"><span class="toggle on"><b>SI</b><i class="knob">III</i></span></td>
                                    <td class="ctr"><span class="toggle off"><i class="knob">III</i><b>NO</b></span></td>
                                    <td>VL043</td><td>Abuelo 7 años + Coca cola</td>
                                    <td class="ctr-img"><span class="thumb"><svg><use href="#i-basket"/></svg></span></td>
                                    <td>und</td>
                                    <td class="price">250.00 <svg class="ok"><use href="#i-ok"/></svg></td>
                                    <td></td><td></td><td></td><td></td>
                                    <td>preparado ron</td><td>0</td><td></td><td>PRODUCTO BASE</td>
                                    <td class="acts"><svg class="act"><use href="#i-mag"/></svg><svg class="act"><use href="#i-pencil"/></svg><svg class="act"><use href="#i-file"/></svg></td>
                                </tr>
                                <tr>
                                    <td>6</td>
                                    <td class="ctr"><span class="toggle off"><i class="knob">III</i><b>NO</b></span></td>
                                    <td class="ctr"><span class="toggle on"><b>SI</b><i class="knob">III</i></span></td>
                                    <td>VL098</td><td>Agua</td>
                                    <td class="ctr-img"><span class="thumb"><svg><use href="#i-basket"/></svg></span></td>
                                    <td>6 Litros</td>
                                    <td class="price price-empty"><svg class="ok"><use href="#i-ok"/></svg></td>
                                    <td></td><td></td><td></td><td></td>
                                    <td>insumos</td><td></td><td></td><td>PRODUCTO BASE</td>
                                    <td class="acts"><svg class="act"><use href="#i-mag"/></svg><svg class="act"><use href="#i-pencil"/></svg><svg class="act"><use href="#i-file"/></svg></td>
                                </tr>
                                <tr>
                                    <td></td><td></td><td></td><td></td><td></td><td></td><td></td><td></td><td></td><td></td><td></td><td></td><td></td><td></td><td></td><td></td><td></td>
                                </tr>
                            </tbody>
                        </table>
                    </main>
                </div>
            </div>
            <div class="page-scroll"><div class="page-thumb"></div></div>
        </div>

        <div class="taskbar">
            <div class="tb-start"><svg class="tb-win"><use href="#i-win"/></svg></div>
            <div class="tb-search">
                <span class="cortana"></span>
                <span class="tb-search-text">Escribe aquí para buscar</span>
                <svg class="tb-mic"><use href="#i-mic"/></svg>
            </div>
            <div class="tb-view"><svg class="tb-icon-sm"><use href="#i-taskview"/></svg></div>
            <div class="tb-app open first"><svg class="tb-icon"><use href="#i-folder"/></svg></div>
            <div class="tb-app open current"><svg class="tb-icon"><use href="#i-chrome"/></svg></div>
            <div class="tb-app"><svg class="tb-icon"><use href="#i-edge"/></svg></div>
            <div class="tb-app open"><svg class="tb-icon"><use href="#i-navicat"/></svg></div>
            <div class="tb-app open"><svg class="tb-icon"><use href="#i-vscode"/></svg></div>
            <div class="tb-app open"><svg class="tb-icon"><use href="#i-chrome"/></svg></div>
            <div class="tb-app open"><svg class="tb-icon"><use href="#i-skype"/></svg><span class="tb-count">1</span></div>
            <div class="tray">
                <svg class="tray-ic tray-people"><use href="#i-people"/></svg>
                <svg class="tray-ic"><use href="#i-chev"/></svg>
                <svg class="tray-ic"><use href="#i-plug"/></svg>
                <svg class="tray-ic"><use href="#i-wifi"/></svg>
                <svg class="tray-ic"><use href="#i-vol"/></svg>
                <div class="clock">14:15<br>09/07/2019</div>
                <div class="tray-note"><svg class="tray-note-ic"><use href="#i-note"/></svg><span class="tb-count">4</span></div>
            </div>
        </div>
    </div>

    <!-- right monitor: vs code -->
    <div class="monitor-right">
        <div class="vs-title">
            <svg class="vs-logo"><use href="#i-vscode"/></svg>
            <div class="vs-menu"><span>File</span><span>Edit</span><span>Selection</span><span>View</span><span>Go</span><span>Debug</span><span>Terminal</span><span>Help</span></div>
            <span class="vs-caption">productos.html - Agil2019 - Visual Studio Code</span>
            <div class="vs-win">
                <svg class="win-btn" viewBox="0 0 12 12"><path stroke="#888" d="M1 6.500h10"/></svg>
                <svg class="win-btn" viewBox="0 0 12 12"><path fill="none" stroke="#888" d="M1.500 3.500h7v8h-7zM3.500 3.500v-3h7v8h-2"/></svg>
                <svg class="win-btn" viewBox="0 0 12 12"><path stroke="#888" d="M1 1l10 10M11 1L1 11"/></svg>
            </div>
        </div>

        <div class="debug-bar">
            <svg class="dbg dbg-grip" viewBox="0 0 8 16"><path fill="#666" d="M0 2h2v2H0zM5 2h2v2H5zM0 7h2v2H0zM5 7h2v2H5zM0 12h2v2H0zM5 12h2v2H5z"/></svg>
            <svg class="dbg" viewBox="0 0 16 16"><path fill="#75beff" d="M3 2h3.500v12H3zM9.500 2H13v12H9.500z"/></svg>
            <svg class="dbg" viewBox="0 0 16 16"><path fill="none" stroke="#4d7ea8" stroke-width="2" d="M2 8c1-5 8-6 11-1"/><path fill="#4d7ea8" d="M15 2v6H9z"/><circle cx="8" cy="13" r="2" fill="#777"/></svg>
            <svg class="dbg" viewBox="0 0 16 16"><path stroke="#4d7ea8" stroke-width="2" d="M8 0v8"/><path fill="#4d7ea8" d="M4 6h8l-4 4z"/><circle cx="8" cy="14" r="2" fill="#777"/></svg>
            <svg class="dbg" viewBox="0 0 16 16"><path stroke="#4d7ea8" stroke-width="2" d="M8 4v7"/><path fill="#4d7ea8" d="M4 5h8L8 0z"/><circle cx="8" cy="14" r="2" fill="#777"/></svg>
            <svg class="dbg" viewBox="0 0 16 16"><path fill="none" stroke="#89d185" stroke-width="2" d="M4 6a6 6 0 1 1-.5 4"/><path fill="#89d185" d="M2 1v6h6z"/></svg>
            <svg class="dbg" viewBox="0 0 16 16"><path fill="#f48771" d="M2 2h12v12H2z"/></svg>
        </div>

        <div class="vs-body">
            <div class="activity">
                <div class="act-item"><svg class="act-ic"><use href="#i-ext"/></svg></div>
                <div class="act-item"><svg class="act-ic"><use href="#i-search"/></svg></div>
                <div class="act-item"><svg class="act-ic"><use href="#i-git"/></svg><span class="act-badge">17</span></div>
                <div class="act-item"><svg class="act-ic"><use href="#i-debug"/></svg></div>
                <div class="act-item"><svg class="act-ic"><use href="#i-ext"/></svg></div>
                <div class="act-item act-bottom"><svg class="act-ic"><use href="#i-gear"/></svg><span class="act-badge">1</span></div>
            </div>

            <div class="explorer">
                <div class="ex-top"></div>
                <div class="ex-head"><span class="twist open"></span>OPEN EDITORS</div>
                <div class="ex-row"><span class="js">JS</span><span class="ex-name mod">serviciosSalida.js</span><span class="ex-desc">public\agil client\www\j...</span><span class="ex-m">M</span></div>
                <div class="ex-row"><span class="js">JS</span><span class="ex-name mod">serviciosProducto.js</span><span class="ex-desc">public\agil client\w...</span><span class="ex-m">M</span></div>
                <div class="ex-row"><span class="js">JS</span><span class="ex-name mod">rutas-empresas.js</span><span class="ex-desc">app\rutas</span><span class="ex-m">M</span></div>
                <div class="ex-row"><span class="js">JS</span><span class="ex-name mod">rutas-productos.js</span><span class="ex-desc">app\rutas</span><span class="ex-m">M</span></div>
                <div class="ex-row"><span class="js">JS</span><span class="ex-name mod">controladoresProducto.js</span><span class="ex-desc">public\agil cli...</span><span class="ex-m">M</span></div>
                <div class="ex-row"><span class="js">JS</span><span class="ex-name mod">controladoresVenta.js</span><span class="ex-desc">public\agil client\...</span><span class="ex-m">M</span></div>
                <div class="ex-row"><span class="htm">&lt;&gt;</span><span class="ex-name mod">ventas.html</span><span class="ex-desc">public\agil client\www\templ...</span><span class="ex-m">M</span></div>
                <div class="ex-row current"><svg class="ex-x"><use href="#i-close"/></svg><span class="htm">&lt;&gt;</span><span class="ex-name mod">productos.html</span><span class="ex-desc">public\agil client\www\te...</span><span class="ex-m">M</span></div>
                <div class="ex-head"><span class="twist open"></span>AGIL2019</div>
                <div class="ex-tree">
                    <div class="tree-row"><span class="htm">&lt;&gt;</span>pantalla-cliente.html</div>
                    <div class="tree-row"><span class="htm">&lt;&gt;</span>pantalla-despacho.html</div>
                    <div class="tree-row"><span class="htm">&lt;&gt;</span>pedidos.html</div>
                    <div class="tree-row"><span class="htm">&lt;&gt;</span>planilla-cargas-sociales.html</div>
                    <div class="tree-row"><span class="htm">&lt;&gt;</span>planilla-rc-iva.html</div>
                    <div class="tree-row"><span class="htm">&lt;&gt;</span>planilla-retroactivos.html</div>
                    <div class="tree-row"><span class="htm">&lt;&gt;</span>planilla-sueldos.html</div>
                    <div class="tree-row"><span class="htm">&lt;&gt;</span>polifuncionalidad.html</div>
                    <div class="tree-row"><span class="htm">&lt;&gt;</span>porteria.html</div>
                    <div class="tree-row current"><span class="htm">&lt;&gt;</span><span class="mod">productos.html</span><span class="ex-m">M</span></div>
                    <div class="tree-row"><span class="htm">&lt;&gt;</span>proformas.html</div>
                    <div class="tree-row"><span class="htm">&lt;&gt;</span>proveedores.html</div>
                    <div class="tree-row"><span class="htm">&lt;&gt;</span>reporte-almacenes.html</div>
                    <div class="tree-row"><span class="htm">&lt;&gt;</span>reporte-rapido-almacenes.html</div>
                    <div class="tree-row"><span class="htm">&lt;&gt;</span>retroactivos-cargas-sociales.html</div>
                    <div class="tree-row"><span class="htm">&lt;&gt;</span>rrhh.html</div>
                    <div class="tree-row"><span class="htm">&lt;&gt;</span>rutas.html</div>
                    <div class="tree-row"><span class="htm">&lt;&gt;</span>seguimiento-app.html</div>
                    <div class="tree-row"><span class="htm">&lt;&gt;</span>solicitud-caja-chica.html</div>
                </div>
                <div class="ex-head"><span class="twist"></span>OUTLINE</div>
            </div>

            <div class="editor">
                <div class="ed-tabs">
                    <div class="ed-tab ed-tab-cut">presas.js</div>
                    <div class="ed-tab ed-w1"><span class="js">JS</span>rutas-productos.js</div>
                    <div class="ed-tab ed-w2"><span class="js">JS</span>controladoresProducto.js</div>
                    <div class="ed-tab ed-w3"><span class="js">JS</span>controladoresVenta.js</div>
                    <div class="ed-tab ed-w4"><span class="htm">&lt;&gt;</span>ventas.html</div>
                    <div class="ed-tab ed-w5 active"><span class="htm">&lt;&gt;</span>productos.html<svg class="ed-x"><use href="#i-close"/></svg></div>
                    <div class="ed-actions">
                        <svg class="ed-act" viewBox="0 0 16 16"><path fill="none" stroke="#c5c5c5" stroke-width="1.2" d="M4 3a1.500 1.500 0 1 1-.01 0zM4 6v8M12 10a1.500 1.500 0 1 1-.01 0zM12 10V3H9"/></svg>
                        <svg class="ed-act" viewBox="0 0 16 16"><path fill="none" stroke="#c5c5c5" stroke-width="1.4" d="M1.500 2.500h13v11h-13zM8 2.500v11"/></svg>
                        <svg class="ed-act" viewBox="0 0 16 16"><circle cx="3" cy="8" r="1.300" fill="#c5c5c5"/><circle cx="8" cy="8" r="1.300" fill="#c5c5c5"/><circle cx="13" cy="8" r="1.300" fill="#c5c5c5"/></svg>
                    </div>
                </div>
                <div class="crumbs">
                    <span>public</span><i class="cr">▸</i><span>agil client</span><i class="cr">▸</i><span>www</span><i class="cr">▸</i><span>templates</span><i class="cr">▸</i><span>agil</span><i class="cr">▸</i><span class="htm">&lt;&gt;</span><span>productos.html</span><i class="cr">▸</i><svg class="cube"><use href="#i-cube"/></svg><span>div.row</span><i class="cr">▸</i><svg class="cube"><use href="#i-cube"/></svg><span>div.col-xs-12</span><i class="cr">▸</i><svg class="cube"><use href="#i-cube"/></svg><span>fieldset</span><i class="cr">▸</i><svg class="cube"><use href="#i-cube"/></svg><span>div.row</span><i class="cr">▸</i><svg class="cube"><use href="#i-cube"/></svg><span>div.col-md-3.col-sm-6</span><i class="cr">▸</i><svg class="cube"><use href="#i-cube"/></svg><span>label</span>
                </div>

                <div class="code-row">
                    <div class="code">
                        <div class="line first"><span class="num">53</span><span class="mark"></span><span class="src"><span class="ind ind3"></span><b>&lt;</b><u>div</u> <s>class</s>=<q>"col-md-3 col-sm-6"</q><b>&gt;</b></span></div>
                        <div class="line"><span class="num">54</span><span class="mark"></span><span class="src"><span class="ind ind4"></span><b class="match">&lt;</b><u>label</u><b class="match">&gt;</b>Relacion: <u>&amp;nbsp;</u><b class="match">&lt;</b><b>/</b><u>label</u><b class="match">&gt;</b></span></div>
                        <div class="line"><span class="num">55</span><span class="mark"></span><span class="src"><span class="ind ind4"></span><b>&lt;</b><u>select</u> <s>class</s>=<q>"form-control"</q> <s>style</s>=<q>"width:150px;"</q> <s>ng-change</s>=<q>"obtenerProductos(filtro)"</q> <s>re</s></span></div>
                        <div class="line"><span class="num">56</span><span class="mark"></span><span class="src"><span class="ind ind5"></span><s>id</s>=<q>"selectGruposProductos"</q> <s>name</s>=<q>"selectGruposProductos"</q> <s>ng-model</s>=<q>"filtro.idrelacion"</q></span></div>
                        <div class="line"><span class="num">57</span><span class="mark"></span><span class="src"><span class="ind ind5"></span><s>ng-options</s>=<q>"grupo.id as grupo.nombre for grupo in conceptosRelacionesProductos.clases</q></span></div>
                        <div class="line"><span class="num">58</span><span class="mark"></span><span class="src"><span class="ind ind5"></span><s>data-placeholder</s>=<q>"Click para escoger"</q><b>&gt;</b></span></div>
                        <div class="line"><span class="num">59</span><span class="mark"></span><span class="src"><span class="ind ind5"></span><b>&lt;</b><u>option</u> <s>value</s>=<q>""</q> <s>selected</s><b>&gt;</b>Todos<b>&lt;/</b><u>option</u><b>&gt;</b></span></div>
                        <div class="line"><span class="num">60</span><span class="mark"></span><span class="src"><span class="ind ind4"></span><b>&lt;/</b><u>select</u><b>&gt;</b></span></div>
                        <div class="line"><span class="num">61</span><span class="mark"></span><span class="src"><span class="ind ind3"></span><b>&lt;/</b><u>div</u><b>&gt;</b></span></div>
                        <div class="line"><span class="num">62</span><span class="mark"></span><span class="src"><span class="ind ind2"></span><b>&lt;/</b><u>div</u><b>&gt;</b></span></div>
                        <div class="line"><span class="num">63</span><span class="mark"></span><span class="src"><span class="ind ind2"></span></span></div>
                        <div class="line"><span class="num">64</span><span class="mark"></span><span class="src"><span class="ind ind1"></span><b>&lt;/</b><u>fieldset</u><b>&gt;</b></span></div>
                        <div class="line"><span class="num">65</span><span class="mark"></span><span class="src"><span class="ind ind2"></span><b>&lt;</b><u>div</u> <s>class</s>=<q>"space-4"</q><b>&gt;&lt;/</b><u>div</u><b>&gt;</b></span></div>
                        <div class="line"><span class="num">66</span><span class="mark none"></span><span class="src"><span class="ind ind2"></span><b>&lt;</b><u>div</u> <s>class</s>=<q>"table-header"</q><b>&gt;</b></span></div>
                        <div class="line"><span class="num">67</span><span class="mark none"></span><span class="src"><span class="ind ind3"></span>Lista de Productos</span></div>
                        <div class="line"><span class="num">68</span><span class="mark none"></span><span class="src"><span class="ind ind3"></span><b>&lt;</b><u>div</u> <s>class</s>=<q>"inline pos-rel pull-right"</q><b>&gt;</b></span></div>
                        <div class="line"><span class="num">69</span><span class="mark none"></span><span class="src comment"><span class="ind ind4"></span>&lt;!--   &lt;a data-toggle="dropdown" href="javascript:void(0)" class="dropdown-toggle button-</span></div>
                        <div class="line"><span class="num">70</span><span class="mark none"></span><span class="src comment"><span class="ind ind5"></span>&lt;i class="glyphicon  glyphicon-list-alt"&gt;&lt;/i&gt;</span></div>
                        <div class="line"><span class="num">71</span><span class="mark none"></span><span class="src comment"><span class="ind ind4"></span>&lt;/a&gt; --&gt;</span></div>
                    </div>
                    <svg class="minimap" viewBox="0 0 105 343" width="105" height="343">
                        <g fill="none" stroke-width="1">
                            <path stroke="#5e8aa8" stroke-dasharray="2 1" d="M17 2h25M17 5h40M14 8h12M12 17h8M10 20h12M15 23h18M17 26h30M20 29h50M20 32h85M22 35h30M20 38h8M7 50h6M4 53h5M4 62h8M7 65h12M12 68h26M12 71h18M14 74h40M18 80h20M22 104h14M30 111h30M30 114h70M34 117h60M30 120h25M26 140h20M30 143h75M34 146h50M28 165h6M30 172h70M34 175h68M34 178h30M30 195h70M34 198h66M34 201h30M28 212h4"/>
                            <path stroke="#8a7259" stroke-dasharray="3 1" d="M30 29h70M28 36h40M22 92h60M30 106h75M14 127h30M36 152h60M36 183h50M40 206h60M30 225h65M36 232h62M34 250h55M36 257h60M34 272h70M36 279h52M30 298h66M36 305h60M34 320h70M36 327h50"/>
                            <path stroke="#4f7a46" stroke-dasharray="2 1" d="M8 67h40M4 88h20M14 100h60M20 103h30M18 216h40"/>
                            <path stroke="#6b6b6b" stroke-dasharray="1.500 1" d="M8 14h6M8 47h6M6 56h4M8 82h8M18 130h6M24 160h8M26 188h5M26 220h8M28 240h6M26 265h8M28 290h6M24 312h6M26 336h6"/>
                        </g>
                    </svg>
                    <div class="overview">
                        <span class="ov ov-slider"></span>
                        <span class="ov ov-g1"></span><span class="ov ov-g2"></span><span class="ov ov-g3"></span><span class="ov ov-g4"></span><span class="ov ov-g5"></span><span class="ov ov-g6"></span><span class="ov ov-g7"></span><span class="ov ov-g8"></span>
                        <span class="ov ov-b1"></span><span class="ov ov-b2"></span><span class="ov ov-b3"></span><span class="ov ov-b4"></span>
                    </div>
                </div>

                <div class="panel">
                    <div class="panel-tabs">
                        <span>PROBLEMS</span><span>OUTPUT</span><span class="on">DEBUG CONSOLE</span><span>TERMINAL</span>
                        <div class="panel-acts">
                            <svg class="ed-act" viewBox="0 0 16 16"><path stroke="#c5c5c5" stroke-width="1.5" d="M7 3h8M7 6h8M1 9h14M1 12h14M1 15h14"/><path stroke="#e06c60" stroke-width="1.2" d="M1 1l4 4M5 1L1 5"/></svg>
                            <svg class="ed-act" viewBox="0 0 16 16"><path fill="none" stroke="#c5c5c5" stroke-width="1.8" d="M2 11l6-6 6 6"/></svg>
                            <svg class="ed-act ed-act-x"><use href="#i-close"/></svg>
                        </div>
                    </div>
                    <div class="log">
                        <div class="log-line first"><span class="log-text">TE CASCADE) ENGINE=InnoDB;</span></div>
                        <div class="log-line"><span class="log-text">Executing (default): CREATE TABLE IF NOT EXISTS `sys_rol` (`id` INTEGER NOT NULL auto_increment , `nombre` VARCH</span><a class="log-src">query.js:376</a></div>
                        <div class="log-line"><span class="log-text">AR(255), `createdAt` DATETIME NOT NULL, `updatedAt` DATETIME NOT NULL, PRIMARY KEY (`id`)) ENGINE=InnoDB;</span></div>
                        <div class="log-line"><span class="log-text">Executing (default): CREATE TABLE IF NOT EXISTS `sys_usuario_rol` (`id` INTEGER NOT NULL auto_increment , `usuar</span><a class="log-src">query.js:376</a></div>
                        <div class="log-line"><span class="log-text">io` INTEGER, `rol` INTEGER, `createdAt` DATETIME NOT NULL, `updatedAt` DATETIME NOT NULL, PRIMARY KEY (`id`), FO</span></div>
                        <div class="log-line"><span class="log-text">REIGN KEY (`usuario`) REFERENCES `sys_usuario` (`id`) ON DELETE SET NULL ON UPDATE CASCADE, FOREIGN KEY (`rol`)</span></div>
                        <div class="log-line"><span class="log-text"> REFERENCES `sys_rol` (`id`) ON DELETE SET NULL ON UPDATE CASCADE) ENGINE=InnoDB;</span></div>
                        <div class="log-line"><span class="log-text">Executing (default): CREATE TABLE IF NOT EXISTS `sys_aplicacion` (`id` INTEGER NOT NULL auto_increment , `titulo</span><a class="log-src">query.js:376</a></div>
                        <div class="log-line"><span class="log-text">` VARCHAR(255), `atributo_clase` VARCHAR(255), `url` VARCHAR(255), `padre` INTEGER, `createdAt` DATETIME NOT NUL</span></div>
                        <div class="log-line"><span class="log-text">L, `updatedAt` DATETIME NOT NULL, PRIMARY KEY (`id`), FOREIGN KEY (`padre`) REFERENCES `sys_aplicacion` (`id`) O</span></div>
                        <div class="log-line"><span class="log-text">N DELETE SET NULL ON UPDATE CASCADE) ENGINE=InnoDB;</span></div>
                        <div class="log-line"><span class="log-text">Executing (default): CREATE TABLE IF NOT EXISTS `sys_rol_aplicacion` (`id` INTEGER NOT NULL auto_increment , `ro</span><a class="log-src">query.js:376</a></div>
                    </div>
                    <div class="log-input">›</div>
                </div>

                <div class="find">
                    <span class="twist find-twist"></span>
                    <div class="find-input">
                        <span class="find-text">span</span>
                        <span class="find-opt">Aa</span><span class="find-opt boxed">Ab|</span><span class="find-opt">.*</span>
                    </div>
                    <span class="find-count">1 of 128</span>
                    <svg class="find-btn" viewBox="0 0 12 12"><path fill="none" stroke="#ddd" stroke-width="1.6" d="M11 6H2M6 2 2 6l4 4"/></svg>
                    <svg class="find-btn" viewBox="0 0 12 12"><path fill="none" stroke="#ddd" stroke-width="1.6" d="M1 6h9M6 2l4 4-4 4"/></svg>
                    <svg class="find-btn" viewBox="0 0 12 12"><path stroke="#666" stroke-width="1.3" d="M0 2h12M0 5h8M0 8h12M0 11h8"/></svg>
                    <svg class="find-btn find-close"><use href="#i-close"/></svg>
                </div>
            </div>
        </div>

        <div class="status">
            <svg class="st-ic" viewBox="0 0 10 14"><path fill="none" stroke="#fff" stroke-width="1.3" d="M2 1.500a1.200 1.200 0 1 0 .01 0zM8 1.500a1.200 1.200 0 1 0 .01 0zM2 4v9M8 4c0 3-6 3-6 5"/></svg>
            <span class="st-branch">master*</span>
            <svg class="st-ic st-sync" viewBox="0 0 14 14"><path fill="none" stroke="#fff" stroke-width="1.8" d="M2 7a5 5 0 0 1 9-3M12 7a5 5 0 0 1-9 3"/><path fill="#fff" d="M12 1v4H8zM2 13V9h4z"/></svg>
            <svg class="st-ic st-err" viewBox="0 0 14 14"><circle cx="7" cy="7" r="6.500" fill="#fff"/><path stroke="#cc6633" stroke-width="1.5" d="M4.500 4.500l5 5M9.500 4.500l-5 5"/></svg>
            <span>0</span>
            <svg class="st-ic st-warn" viewBox="0 0 14 14"><path fill="#fff" d="M7 .5l7 13H0z"/><path stroke="#cc6633" stroke-width="1.3" d="M7 5v5M7 11v1.200"/></svg>
            <span>0</span>
            <div class="st-right">
                <span>6 selections</span>
                <span>Tab Size: 4</span>
                <span>UTF-8</span>
                <span>CRLF</span>
                <span>HTML</span>
                <svg class="st-ic st-smile" viewBox="0 0 14 14"><circle cx="7" cy="7" r="6.500" fill="#fff"/><circle cx="4.700" cy="5.500" r="1" fill="#cc6633"/><circle cx="9.300" cy="5.500" r="1" fill="#cc6633"/><path fill="none" stroke="#cc6633" d="M4 9c1.500 2 4.500 2 6 0"/></svg>
                <svg class="st-ic" viewBox="0 0 14 16"><path fill="#fff" d="M7 0c1 0 1.500.6 1.500 1.300C11 2 12 4 12 7c0 2.500.5 3.500 2 5v1H0v-1c1.500-1.500 2-2.500 2-5 0-3 1-5 3.500-5.700C5.500.6 6 0 7 0zM5 14h4c0 1.200-1 2-2 2s-2-.8-2-2z"/></svg>
                <span>1</span>
            </div>
        </div>

        <div class="taskbar taskbar-right">
            <div class="tb-cell"><svg class="tb-win"><use href="#i-win"/></svg></div>
            <div class="tb-cell"><span class="cortana cortana-w"></span></div>
            <div class="tb-cell"><svg class="tb-icon-sm"><use href="#i-taskview"/></svg></div>
            <div class="tb-app open first"><svg class="tb-icon"><use href="#i-folder"/></svg></div>
            <div class="tb-app open current"><svg class="tb-icon"><use href="#i-chrome"/></svg></div>
            <div class="tb-app"><svg class="tb-icon"><use href="#i-edge"/></svg></div>
            <div class="tb-app open"><svg class="tb-icon"><use href="#i-navicat"/></svg></div>
            <div class="tb-app open"><svg class="tb-icon"><use href="#i-vscode"/></svg></div>
            <div class="tb-app open"><svg class="tb-icon"><use href="#i-chrome"/></svg></div>
            <div class="tb-app open"><svg class="tb-icon"><use href="#i-skype"/></svg><span class="tb-count">1</span></div>
            <div class="clock clock-right">14:16<br>09/07/2019</div>
        </div>
    </div>
</div>
</body>
</html>
```
FILE: styles.css
```css
* {
    box-sizing: border-box;
}
html, body {
    margin: 0;
    padding: 0;
    background: #0b0f18;
}
body {
    width: 2732px;
    height: 768px;
    overflow: hidden;
    font-family: Roboto, "Open Sans", sans-serif;
}
.defs {
    position: absolute;
}
.screen {
    display: flex;
    width: 2732px;
    height: 768px;
}
.monitor-left {
    width: 1366px;
    height: 768px;
    display: flex;
    flex-direction: column;
}
.monitor-right {
    position: relative;
    width: 1366px;
    height: 768px;
    display: flex;
    flex-direction: column;
    background: #333;
}

/* browser chrome */
.tabstrip {
    height: 34px;
    flex: none;
    display: flex;
    align-items: stretch;
    background: #212121;
    padding-left: 8px;
    color: #ddd;
    font-size: 12.5px;
}
.tab {
    width: 162px;
    display: flex;
    align-items: center;
    padding: 0 8px 0 10px;
    gap: 8px;
    position: relative;
}
.tab-first {
    padding-left: 12px;
}
.tab.active {
    background: #3b3b3b;
    border-radius: 8px 8px 0 0;
}
.tab.sep::after {
    content: "";
    position: absolute;
    right: 0;
    top: 7px;
    bottom: 7px;
    width: 1px;
    background: #888;
}
.tab-icon {
    width: 16px;
    height: 16px;
    flex: none;
}
.agil-teal {
    color: #1a84b4;
}
.tab-title {
    flex: 1;
    white-space: nowrap;
}
.tab-x {
    width: 9px;
    height: 9px;
    flex: none;
    color: #e0e0e0;
}
.tab-x.dim {
    color: #888;
}
.tab-sound {
    width: 11px;
    height: 11px;
    flex: none;
}
.new-tab {
    width: 24px;
    margin-left: 3px;
    font-size: 24px;
    font-weight: 300;
    line-height: 33px;
    text-align: center;
    color: #eee;
}
.win-controls {
    margin-left: auto;
    display: flex;
    align-items: center;
    padding-bottom: 4px;
}
.win-btn {
    width: 12px;
    height: 12px;
    margin: 0 17px;
}
.toolbar {
    height: 34px;
    flex: none;
    display: flex;
    align-items: center;
    background: #3a3a3a;
}
.nav-btns {
    width: 108px;
    display: flex;
    padding-left: 14px;
    gap: 16px;
}
.nav-btn {
    width: 16px;
    height: 16px;
}
.omnibox {
    width: 1073px;
    height: 28px;
    border-radius: 14px;
    background: #f1f3f4;
    display: flex;
    align-items: center;
    padding: 0 9px 0 10px;
    color: #7a7a7a;
    font-size: 14.5px;
}
.omni-info {
    width: 16px;
    height: 16px;
    margin-right: 8px;
}
.url {
    flex: 1;
}
.url-host {
    color: #333;
}
.omni-btn {
    width: 16px;
    height: 16px;
    margin-left: 16px;
}
.ext-btn {
    width: 16px;
    height: 16px;
    margin-left: 14px;
    margin-right: 2px;
}
.ext-abp {
    width: 17px;
    height: 17px;
    margin-left: 16px;
    border-radius: 5px;
    background: #bdbdbd;
    color: #333;
    font-size: 7.5px;
    font-weight: 700;
    line-height: 17px;
    text-align: center;
}
.tool-sep {
    width: 1px;
    height: 16px;
    margin-left: 13px;
    background: #666;
}
.avatar {
    width: 20px;
    height: 20px;
    margin-left: 12px;
}
.menu-dots {
    width: 4px;
    height: 16px;
    margin-left: 22px;
}
.bookmarks {
    height: 35px;
    flex: none;
    display: flex;
    align-items: center;
    padding-left: 13px;
    background: #3a3a3a;
    border-bottom: 1px solid #1e1e1e;
    color: #e4e4e4;
    font-size: 12.5px;
}
.bm {
    width: 154px;
    display: flex;
    align-items: center;
    gap: 8px;
    white-space: nowrap;
}
.bm-apps {
    width: 107px;
}
.bm-ventas {
    width: 83px;
}
.bm-icon {
    width: 16px;
    height: 16px;
    flex: none;
}
.bm-more {
    margin-left: 55px;
    font-size: 16px;
    color: #aaa;
}

/* the app inside the browser */
.app {
    flex: 1;
    min-height: 0;
    display: flex;
    background: #fff;
}
.app-main {
    width: 1358px;
    display: flex;
    flex-direction: column;
    min-height: 0;
}
.page-scroll {
    width: 8px;
    background: #e0e0e8;
}
.page-thumb {
    height: 315px;
    background: #3f92ad;
    border-radius: 0 0 3px 3px;
}
.app-header {
    height: 38px;
    flex: none;
    display: flex;
    overflow: hidden;
    background: #448ab8;
    color: #fff;
    font-family: "Liberation Serif", serif;
    padding-left: 21px;
    padding-right: 20px;
}
.brand-logo {
    width: 20px;
    height: 24px;
    margin-top: 7px;
    color: #fff;
}
.brand-text {
    margin-left: 5px;
    font-size: 16.6px;
    line-height: 36px;
    white-space: nowrap;
}
.hd-notify {
    margin-left: auto;
    width: 53px;
    height: 36px;
    background: #8a2d60;
    display: flex;
    align-items: flex-start;
    padding: 7px 4px 0 7px;
    gap: 5px;
}
.hd-bell {
    width: 14px;
    height: 16px;
    margin-top: 3px;
}
.hd-badge {
    width: 23px;
    height: 15px;
    border-radius: 7px;
    background: #d0573a;
    font-size: 10.5px;
    font-weight: 700;
    line-height: 15px;
    text-align: center;
    margin-top: 1px;
}
.hd-profile {
    margin-left: 1px;
    width: 123px;
    height: 36px;
    display: flex;
    align-items: flex-start;
    padding-left: 7px;
    background: #62a5d1;
    font-size: 10.5px;
}
.photo {
    flex: none;
    width: 31px;
    height: 50px;
    margin-top: -4px;
    border: 1.5px solid #fff;
    border-radius: 50%;
    position: relative;
    text-align: center;
}
.photo-broken {
    width: 12px;
    height: 12px;
    position: absolute;
    left: 1px;
    top: 3px;
}
.photo-alt {
    display: block;
    padding-top: 21px;
    font-size: 10.5px;
}
.hello {
    margin-left: 10px;
    padding-top: 5px;
    line-height: 12px;
    white-space: nowrap;
}
.hd-caret {
    width: 0;
    height: 0;
    margin-left: 7px;
    margin-top: 21px;
    border-left: 4px solid transparent;
    border-right: 4px solid transparent;
    border-top: 5px solid #fff;
}
.hd-home {
    margin-left: 1px;
    width: 40px;
    height: 36px;
    background: #2f6a94;
    padding: 10px 0 0 10px;
}
.hd-home-icon {
    width: 28px;
    height: 26px;
    margin-top: -4px;
}
.app-body {
    flex: 1;
    min-height: 0;
    display: flex;
    overflow: hidden;
    font-family: "Liberation Serif", serif;
}
.side {
    width: 151px;
    flex: none;
    background: #f8f8f8;
    border-right: 1px solid #d8d8d8;
    overflow: hidden;
    margin-top: -1px;
}
.side-item {
    height: 32px;
    display: flex;
    align-items: center;
    gap: 9px;
    padding-left: 9px;
    border-bottom: 1px solid #f3f3f3;
    color: #555;
    font-size: 10.3px;
    letter-spacing: .14px;
    white-space: nowrap;
}
.side-item:nth-child(n+7) {
    border-bottom-color: #e2e2e2;
}
.side-ic {
    width: 16px;
    height: 16px;
    flex: none;
    color: #555;
}
.content {
    position: relative;
    flex: 1;
    min-width: 0;
    padding: 36px 16px 0 17px;
}
.alert-pill {
    position: absolute;
    left: 592px;
    top: 7px;
    width: 24px;
    height: 16px;
    border-radius: 50%;
    background: #e8403d;
    display: flex;
    align-items: center;
    justify-content: center;
}
.page-title {
    margin: 0;
    height: 28px;
    padding-bottom: 3px;
    border-bottom: 1px solid #d5e3f0;
    font-family: "Open Sans", sans-serif;
    font-size: 17px;
    font-weight: 300;
    line-height: 24px;
    color: #4a8cc8;
}
.btn-row {
    display: flex;
    gap: 2px;
    margin-top: 13px;
}
.btn {
    height: 32px;
    border: 0;
    padding: 0;
    font-family: "Liberation Serif", serif;
    font-size: 11px;
}
.btn-primary {
    width: 74px;
    margin-right: 1px;
    background: #428bca;
    color: #fff;
    font-size: 11.5px;
}
.btn-plus {
    font-family: "Liberation Sans", sans-serif;
    font-size: 19px;
    font-weight: 700;
    line-height: 12px;
    vertical-align: -2px;
    margin-right: 5px;
}
.btn-warn {
    background: #ffdf8a;
    color: #8a6a3c;
    letter-spacing: .15px;
}
.btn-a {
    width: 160px;
}
.btn-b {
    width: 146px;
}
.filter-title {
    margin: 8px 0 0;
    height: 24px;
    border-bottom: 1px solid #e5e5e5;
    font-size: 16.5px;
    font-weight: 400;
    line-height: 24px;
    color: #333;
}
.filters {
    display: grid;
    grid-template-columns: repeat(4, 299.5px);
    margin-top: 18px;
}
.field-label {
    display: block;
    height: 13px;
    font-size: 11px;
    line-height: 12px;
    color: #333;
}
.select {
    width: 120px;
    height: 28px;
    display: flex;
    align-items: center;
    padding: 0 6px 0 8px;
    border: 1px solid #d5d5d5;
    background: #fff;
    color: #777;
    font-size: 11px;
}
.select.focus {
    border-color: #f59942;
    color: #555;
}
.select-val {
    flex: 1;
    white-space: nowrap;
}
.arrow {
    flex: none;
    width: 0;
    height: 0;
    margin-left: 6px;
    border-left: 3px solid transparent;
    border-right: 3px solid transparent;
    border-top: 6px solid #777;
}
.select-sm {
    width: 50px;
    height: 24px;
    font-size: 10.5px;
    padding: 0 5px 0 6px;
}
.list-head {
    height: 30px;
    margin-top: 6px;
    display: flex;
    align-items: center;
    padding-left: 9px;
    padding-right: 10px;
    background: #307ecc;
    color: #fff;
    font-size: 11.8px;
}
.list-head > span:first-child {
    margin-right: auto;
}
.list-tool {
    width: 23px;
    height: 23px;
    display: flex;
    align-items: center;
    justify-content: center;
}
.list-tool.active {
    background: #4a90d4;
}
.list-tools {
    height: 47px;
    margin-top: 1px;
    display: flex;
    align-items: center;
    gap: 6px;
    padding-left: 24px;
    padding-right: 27px;
    background: #eff3f8;
    font-size: 11px;
    color: #444;
}
.search-label {
    margin-left: auto;
}
.search-box {
    width: 151px;
    height: 24px;
    border: 1px solid #d5d5d5;
    background: #fff;
    padding: 0;
}
.grid {
    width: 1173px;
    margin-left: 1px;
    border-collapse: collapse;
    table-layout: fixed;
    font-size: 10.5px;
    line-height: 14px;
    color: #393939;
}
.w-n { width: 24.5px; }
.w-pub { width: 78.5px; }
.w-inv { width: 94.5px; }
.w-cod { width: 53.5px; }
.w-nom { width: 94px; }
.w-img { width: 54px; }
.w-uni { width: 78.5px; }
.w-pre { width: 69px; }
.w-min { width: 81px; }
.w-des { width: 84px; }
.w-c1 { width: 90px; }
.w-c2 { width: 91px; }
.w-gru { width: 57px; }
.w-sub { width: 58px; }
.w-pad { width: 41px; }
.w-tip { width: 70px; }
.w-acc { width: 54px; }
.grid th {
    height: 41px;
    padding: 0 4px;
    border: 1px solid #ddd;
    background: linear-gradient(#f8f8f8, #ececec);
    color: #4a8dcf;
    font-weight: 700;
    text-align: center;
}
.grid th.plain {
    color: #707070;
}
.sort {
    width: 7px;
    height: 9px;
    vertical-align: -1px;
}
.grid td {
    height: 43px;
    padding: 7px 7px 0;
    border: 1px solid #e0e0e0;
    vertical-align: top;
}
.grid tbody tr:nth-child(odd) {
    background: #f9f9f9;
}
.grid td.ctr {
    padding: 6px 0 0;
    text-align: center;
}
.grid td.ctr-img {
    padding: 6px 0 0 6px;
}
.toggle {
    width: 44px;
    height: 19px;
    display: inline-flex;
    align-items: center;
    justify-content: space-between;
    border-radius: 10px;
    color: #fff;
    font-size: 10px;
    line-height: 19px;
    vertical-align: top;
}
.toggle b {
    font-weight: 700;
}
.toggle.on {
    background: #428bca;
    padding: 0 1px 0 5px;
}
.toggle.off {
    background: #8b9aa3;
    padding: 0 5px 0 1px;
}
.knob {
    width: 17px;
    height: 17px;
    border-radius: 50%;
    background: #fff;
    box-shadow: -1px 1px 1px rgba(0, 0, 0, .35);
    color: #888;
    font-size: 8px;
    font-style: normal;
    line-height: 16px;
    text-align: center;
}
.thumb {
    width: 40px;
    height: 27px;
    display: block;
    padding: 0 8px;
    background: #efefef;
}
.thumb svg {
    width: 24px;
    height: 26px;
    display: block;
}
.price {
    color: #7aa35c;
    white-space: nowrap;
}
.ok {
    width: 9px;
    height: 9px;
    margin-left: 4px;
    vertical-align: -1px;
}
.grid td.price-empty {
    padding-left: 11px;
}
.grid td.acts {
    padding: 6px 0 0 9px;
    line-height: 0;
}
.act {
    width: 13px;
    height: 14px;
    margin-right: 7px;
    margin-bottom: 1px;
}

/* windows taskbar */
.taskbar {
    height: 40px;
    flex: none;
    display: flex;
    align-items: stretch;
    background: #0b0f18;
    color: #fff;
}
.tb-start {
    width: 48px;
    background: #06080d;
    display: flex;
    align-items: center;
    justify-content: center;
}
.tb-win {
    width: 16px;
    height: 16px;
}
.tb-search {
    width: 344px;
    display: flex;
    align-items: center;
    background: #f2f2f2;
    color: #333;
    padding-left: 10px;
    font-family: "Noto Sans", sans-serif;
    font-size: 14px;
}
.cortana {
    width: 20px;
    height: 20px;
    border: 3px solid #222;
    border-radius: 50%;
    flex: none;
}
.cortana-w {
    width: 15px;
    height: 17px;
    border-color: #fff;
    border-width: 2px;
}
.tb-search-text {
    margin-left: 10px;
    flex: 1;
    letter-spacing: .1px;
}
.tb-mic {
    width: 11px;
    height: 20px;
    margin-right: 15px;
}
.tb-view {
    width: 48px;
    display: flex;
    align-items: center;
    justify-content: center;
}
.tb-icon-sm {
    width: 16px;
    height: 18px;
}
.tb-app {
    width: 49px;
    display: flex;
    align-items: center;
    justify-content: center;
    position: relative;
}
.tb-app.first {
    margin-left: 3px;
}
.tb-app.open::after {
    content: "";
    position: absolute;
    left: 4px;
    right: 4px;
    bottom: 0;
    height: 2px;
    background: #76b9ed;
}
.tb-app.current {
    background: #363a41;
}
.tb-app.current::after {
    left: 0;
    right: 0;
}
.tb-icon {
    width: 24px;
    height: 24px;
}
.tb-count {
    position: absolute;
    left: 28px;
    top: 17px;
    width: 17px;
    height: 17px;
    border: 1px solid #999;
    border-radius: 50%;
    background: #333;
    color: #fff;
    font-size: 10.5px;
    line-height: 15px;
    text-align: center;
}
.tray {
    margin-left: auto;
    display: flex;
    align-items: center;
    padding-right: 13px;
}
.tray-ic {
    width: 16px;
    height: 16px;
    margin: 0 8px;
}
.tray-people {
    margin-right: 16px;
}
.clock {
    width: 70px;
    font-size: 12px;
    line-height: 18px;
    text-align: center;
    white-space: nowrap;
}
.tray-note {
    position: relative;
    width: 40px;
    height: 40px;
    display: flex;
    align-items: center;
    justify-content: center;
}
.tray-note-ic {
    width: 16px;
    height: 16px;
}
.tray-note .tb-count {
    left: 20px;
    top: 15px;
}
.taskbar-right {
    height: 41px;
}
.tb-cell {
    width: 48px;
    display: flex;
    align-items: center;
    justify-content: center;
}
.taskbar-right .tb-app.first {
    margin-left: 2px;
}
.clock-right {
    margin-left: auto;
    padding-right: 6px;
    padding-top: 1px;
    text-align: right;
    align-self: center;
}

/* vs code */
.vs-title {
    height: 29px;
    flex: none;
    display: flex;
    align-items: center;
    background: #333;
    color: #a4a4a4;
    font-size: 13px;
}
.vs-logo {
    width: 18px;
    height: 18px;
    margin-left: 8px;
}
.vs-menu {
    display: flex;
    gap: 16px;
    margin-left: 16px;
}
.vs-caption {
    position: absolute;
    left: 558px;
    top: 6px;
    color: #999;
}
.vs-win {
    margin-left: auto;
    display: flex;
}
.debug-bar {
    position: absolute;
    left: 0;
    top: 29px;
    width: 214px;
    height: 32px;
    display: flex;
    align-items: center;
    padding-left: 11px;
    background: #333;
    box-shadow: 0 2px 8px #000;
    z-index: 5;
}
.dbg {
    width: 16px;
    height: 16px;
    margin-right: 16px;
}
.dbg-grip {
    width: 8px;
    margin-right: 15px;
}
.vs-body {
    flex: 1;
    min-height: 0;
    display: flex;
    position: relative;
}
.activity {
    width: 49px;
    flex: none;
    display: flex;
    flex-direction: column;
    background: #333;
}
.act-item {
    position: relative;
    width: 49px;
    height: 50px;
    flex: none;
    display: flex;
    align-items: center;
    justify-content: center;
    color: #9a9a9a;
}
.act-bottom {
    margin-top: auto;
}
.act-ic {
    width: 24px;
    height: 24px;
}
.act-badge {
    position: absolute;
    left: 20px;
    top: 26px;
    min-width: 20px;
    height: 20px;
    border-radius: 10px;
    background: #007acc;
    color: #fff;
    font-size: 12px;
    line-height: 20px;
    text-align: center;
}
.explorer {
    width: 317px;
    flex: none;
    display: flex;
    flex-direction: column;
    background: #252526;
    color: #ccc;
    font-size: 13px;
}
.ex-top {
    height: 35px;
    flex: none;
}
.ex-head {
    height: 22px;
    flex: none;
    display: flex;
    align-items: center;
    padding-left: 8px;
    background: #383838;
    color: #ccc;
    font-size: 11.5px;
    font-weight: 700;
}
.twist {
    width: 0;
    height: 0;
    margin-right: 8px;
    border-top: 4px solid transparent;
    border-bottom: 4px solid transparent;
    border-left: 5px solid #ccc;
}
.twist.open {
    border-top: 0;
    border-bottom: 6px solid #ccc;
    border-left: 6px solid transparent;
}
.ex-row {
    height: 22px;
    flex: none;
    display: flex;
    align-items: center;
    padding: 0 11px 0 38px;
    white-space: nowrap;
    position: relative;
}
.ex-row.current, .tree-row.current {
    background: #37373d;
}
.ex-x {
    position: absolute;
    left: 21px;
    top: 7px;
    width: 9px;
    height: 9px;
    color: #eee;
}
.js {
    width: 12px;
    margin-right: 6px;
    color: #cbcb41;
    font-size: 10px;
    font-weight: 700;
    flex: none;
}
.htm {
    width: 12px;
    margin-right: 6px;
    color: #e37933;
    font-family: "Liberation Mono", monospace;
    font-size: 9px;
    font-weight: 700;
    letter-spacing: -1px;
    flex: none;
}
.mod {
    color: #d0bf96;
}
.ex-name {
    margin-right: 6px;
    letter-spacing: -.15px;
}
.ex-desc {
    color: #8f8a78;
    font-size: 12px;
    letter-spacing: -.15px;
}
.ex-m {
    margin-left: auto;
    padding-left: 4px;
    color: #c9a86a;
}
.ex-tree {
    flex: 1;
    min-height: 0;
    overflow: hidden;
}
.tree-row {
    height: 22px;
    display: flex;
    align-items: center;
    padding: 0 11px 0 55px;
    white-space: nowrap;
    color: #c8c8c8;
    letter-spacing: -.15px;
    position: relative;
    top: -8px;
}
.editor {
    position: relative;
    flex: 1;
    min-width: 0;
    display: flex;
    flex-direction: column;
    background: #1e1e1e;
}
.ed-tabs {
    height: 35px;
    flex: none;
    display: flex;
    background: #252526;
}
.ed-tab {
    height: 35px;
    flex: none;
    display: flex;
    align-items: center;
    padding-left: 15px;
    background: #2d2d2d;
    border-right: 1px solid #252526;
    color: #969696;
    font-size: 13.5px;
    white-space: nowrap;
}
.ed-tab-cut {
    width: 72px;
    padding-left: 0;
    padding-right: 13px;
    justify-content: flex-end;
}
.ed-w1 { width: 165px; }
.ed-w2 { width: 204.5px; }
.ed-w3 { width: 184px; }
.ed-w4 { width: 127px; }
.ed-w5 { width: 150px; }
.ed-tab.active {
    background: #1e1e1e;
    border-right: 0;
    color: #fff;
}
.ed-x {
    width: 9px;
    height: 9px;
    margin-left: 10px;
    color: #eee;
}
.ed-actions, .panel-acts {
    margin-left: auto;
    display: flex;
    align-items: center;
    gap: 16px;
    padding-right: 9px;
}
.ed-act {
    width: 16px;
    height: 16px;
}
.ed-act-x {
    width: 11px;
    height: 11px;
    margin: 0 2.5px;
    color: #c5c5c5;
}
.crumbs {
    height: 22px;
    flex: none;
    display: flex;
    align-items: center;
    padding-left: 16px;
    gap: 3px;
    background: #1e1e1e;
    color: #a8a8a8;
    font-size: 13.2px;
    white-space: nowrap;
    box-shadow: 0 2px 4px #000;
    position: relative;
    z-index: 2;
}
.crumbs .htm {
    margin-right: 2px;
    margin-left: 3px;
}
.cr {
    font-style: normal;
    font-size: 10px;
    color: #888;
    margin: 0 3px;
}
.cube {
    width: 13px;
    height: 13px;
}
.code-row {
    height: 343px;
    flex: none;
    display: flex;
    overflow: hidden;
}
.code {
    width: 883px;
    flex: none;
    overflow: hidden;
    font-family: "Liberation Mono", monospace;
    font-size: 13px;
    letter-spacing: -.12px;
    color: #d4d4d4;
}
.line {
    height: 19px;
    display: flex;
    line-height: 19px;
}
.line.first {
    margin-top: -7px;
}
.num {
    width: 49px;
    flex: none;
    text-align: right;
    color: #858585;
}
.mark {
    width: 3px;
    flex: none;
    margin-left: 8px;
    background: #587c0c;
}
.mark.none {
    background: none;
}
.src {
    margin-left: 16px;
    white-space: pre;
}
.src b {
    font-weight: 400;
    color: #808080;
}
.src u {
    text-decoration: none;
    color: #569cd6;
}
.src s {
    text-decoration: none;
    color: #9cdcfe;
}
.src q {
    quotes: none;
    color: #ce9178;
}
.src .match {
    outline: 1px solid #777;
    outline-offset: -1px;
    background: #0a3a2a;
}
.comment {
    color: #608b4e;
}
.ind {
    display: inline-block;
    height: 19px;
    vertical-align: top;
    background: repeating-linear-gradient(90deg, #404040 0, #404040 1px, transparent 1px, transparent 30.72px);
}
.ind1 { width: 30.72px; }
.ind2 { width: 61.44px; }
.ind3 { width: 92.16px; }
.ind4 { width: 122.88px; }
.ind5 { width: 153.6px; }
.minimap {
    flex: none;
}
.overview {
    position: relative;
    flex: 1;
    border-left: 1px solid #333;
}
.ov {
    position: absolute;
    display: block;
}
.ov-slider { left: 0; right: 0; top: 6px; height: 6px; background: #888; }
.ov-g1 { left: 4px; width: 4px; top: 0; height: 4px; background: #b8862e; }
.ov-g2 { left: 4px; width: 4px; top: 14px; height: 45px; background: #b8862e; }
.ov-g3 { left: 4px; width: 4px; top: 84px; height: 12px; background: #b8862e; }
.ov-g4 { left: 4px; width: 4px; top: 102px; height: 5px; background: #b8862e; }
.ov-g5 { left: 4px; width: 4px; top: 126px; height: 15px; background: #b8862e; }
.ov-g6 { left: 4px; width: 4px; top: 252px; height: 14px; background: #b8862e; }
.ov-g7 { left: 4px; width: 4px; top: 286px; height: 41px; background: #b8862e; }
.ov-g8 { left: 4px; width: 4px; top: 331px; height: 6px; background: #b8862e; }
.ov-b1 { left: 0; width: 4px; top: 27px; height: 5px; background: #1c6ea4; }
.ov-b2 { left: 0; width: 4px; top: 134px; height: 7px; background: #1c6ea4; }
.ov-b3 { left: 0; width: 4px; top: 275px; height: 5px; background: #1c6ea4; }
.ov-b4 { left: 0; width: 4px; top: 299px; height: 6px; background: #1c6ea4; }
.panel {
    flex: 1;
    min-height: 0;
    display: flex;
    flex-direction: column;
    border-top: 1px solid #454545;
    background: #1e1e1e;
}
.panel-tabs {
    height: 34px;
    flex: none;
    display: flex;
    align-items: center;
    padding-left: 20px;
    gap: 20px;
    color: #8c8c8c;
    font-size: 11.5px;
    position: relative;
    box-shadow: 0 1px 3px #000;
    z-index: 1;
}
.panel-tabs > span {
    line-height: 30px;
    height: 32px;
    border-bottom: 1px solid transparent;
}
.panel-tabs > .on {
    color: #e7e7e7;
    border-bottom-color: #bbb;
}
.log {
    height: 222px;
    flex: none;
    overflow: hidden;
    font-family: "Liberation Mono", monospace;
    font-size: 13px;
    letter-spacing: -.12px;
    color: #ccc;
}
.log-line {
    height: 19px;
    line-height: 19px;
    display: flex;
    padding-left: 30px;
    white-space: pre;
}
.log-line.first {
    margin-top: -5px;
}
.log-text {
    width: 870px;
    flex: none;
}
.log-src {
    text-decoration: underline;
}
.log-input {
    flex: 1;
    border-top: 1px solid #454545;
    padding-left: 9px;
    color: #ccc;
    font-size: 17px;
    line-height: 17px;
}
.find {
    position: absolute;
    left: 450px;
    top: 57px;
    width: 419px;
    height: 34px;
    display: flex;
    align-items: center;
    padding-left: 7px;
    background: #252526;
    box-shadow: 0 2px 8px #000;
    z-index: 3;
    color: #ccc;
    font-size: 13.5px;
}
.find-twist {
    margin-right: 9px;
}
.find-input {
    width: 217px;
    height: 25px;
    display: flex;
    align-items: center;
    padding: 0 6px 0 4px;
    background: #3c3c3c;
}
.find-text {
    flex: 1;
}
.find-opt {
    margin-left: 7px;
    padding: 0 1px;
    color: #9a9a9a;
    font-size: 11.5px;
}
.find-opt.boxed {
    outline: 1px solid #666;
}
.find-count {
    margin-left: 6px;
    width: 86px;
}
.find-btn {
    width: 12px;
    height: 12px;
    margin-right: 9px;
}
.find-close {
    margin-left: 4px;
    width: 10px;
    height: 10px;
    color: #eee;
}
.status {
    height: 22px;
    flex: none;
    display: flex;
    align-items: center;
    padding-left: 13px;
    background: #cc6633;
    color: #fff;
    font-size: 12.5px;
    white-space: nowrap;
}
.st-ic {
    width: 13px;
    height: 13px;
    flex: none;
}
.st-branch {
    margin-left: 3px;
}
.st-sync {
    margin-left: 14px;
}
.st-err {
    margin-left: 15px;
    margin-right: 3px;
}
.st-warn {
    margin-left: 5px;
    margin-right: 4px;
}
.st-right {
    margin-left: auto;
    display: flex;
    align-items: center;
    padding-right: 14px;
}
.st-right > span {
    margin-right: 14px;
}
.st-right > span:last-child {
    margin: 0 0 0 5px;
}
.st-smile {
    margin-right: 16px;
}
```
